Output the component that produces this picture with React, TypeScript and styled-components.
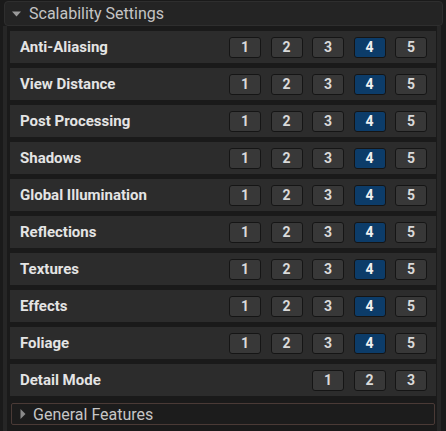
import React from "react";
import styled, { createGlobalStyle } from "styled-components";

const Global = createGlobalStyle`
  html, body { margin: 0; padding: 0; background: #1a1a1a; }
  body { width: 446px; height: 431px; overflow: hidden; font-family: Roboto, "Liberation Sans", sans-serif; }
`;

const Page = styled.div`
  width: 446px;
  height: 431px;
  background: #1a1a1a;
  display: flex;
  flex-direction: column;
`;

const Header = styled.div`
  margin: 1px 3px 0 4px;
  height: 23px;
  border: 1px solid #2e2e2e;
  border-radius: 4px;
  background: #242424;
  display: flex;
  align-items: center;
  padding-left: 7px;
  gap: 8px;
  color: #c4c4c4;
  font-size: 16px;
`;

const Frame = styled.div`
  flex: 1;
  margin: 0 5px 0 3px;
  border-left: 4px solid #262626;
  border-right: 4px solid #262626;
  background: #1a1a1a;
  padding: 5px 1px 0 3px;
  display: flex;
  flex-direction: column;
  gap: 5px;
`;

const Row = styled.div`
  height: 32px;
  background: #2c2c2c;
  display: flex;
  align-items: center;
  padding: 0 9px 0 10px;
`;

const Label = styled.div`
  flex: 1;
  color: #e4e4e4;
  font-size: 15px;
  font-weight: 700;
`;

const Buttons = styled.div`
  display: flex;
  gap: 9.5px;
`;

const Btn = styled.div<{ $active?: boolean }>`
  width: 32px;
  height: 21px;
  box-sizing: border-box;
  border: 1px solid #151515;
  border-radius: 3px;
  background: ${(p) => (p.$active ? "#0c3c69" : "#383838")};
  color: ${(p) => (p.$active ? "#f0f0f0" : "#dadada")};
  font-size: 14px;
  font-weight: 700;
  display: flex;
  align-items: center;
  justify-content: center;
`;

const Section = styled.div`
  margin: 2px 1px 0 1px;
  height: 20px;
  border: 1px solid #4a3a36;
  border-radius: 2px;
  background: #1c1c1c;
  display: flex;
  align-items: center;
  padding-left: 8px;
  gap: 7px;
  color: #c6c6c6;
  font-size: 16px;
`;

const settings = [
  "Anti-Aliasing",
  "View Distance",
  "Post Processing",
  "Shadows",
  "Global Illumination",
  "Reflections",
  "Textures",
  "Effects",
  "Foliage",
];

const DownArrow = () => (
  <svg width="9" height="6" viewBox="0 0 9 6">
    <path d="M0 0.5 L9 0.5 L4.5 5.5 Z" fill="#9a9a9a" />
  </svg>
);

const RightArrow = () => (
  <svg width="6" height="10" viewBox="0 0 6 10">
    <path d="M0.5 0 L5.5 5 L0.5 10 Z" fill="#8a8a8a" />
  </svg>
);

export default function App() {
  return (
    <Page>
      <Global />
      <Header>
        <DownArrow />
        <span>Scalability Settings</span>
      </Header>
      <Frame>
        {settings.map((s) => (
          <Row key={s}>
            <Label>{s}</Label>
            <Buttons>
              {[1, 2, 3, 4, 5].map((n) => (
                <Btn key={n} $active={n === 4}>
                  {n}
                </Btn>
              ))}
            </Buttons>
          </Row>
        ))}
        <Row>
          <Label>Detail Mode</Label>
          <Buttons>
            {[1, 2, 3].map((n) => (
              <Btn key={n}>{n}</Btn>
            ))}
          </Buttons>
        </Row>
        <Section>
          <RightArrow />
          <span>General Features</span>
        </Section>
      </Frame>
    </Page>
  );
}
